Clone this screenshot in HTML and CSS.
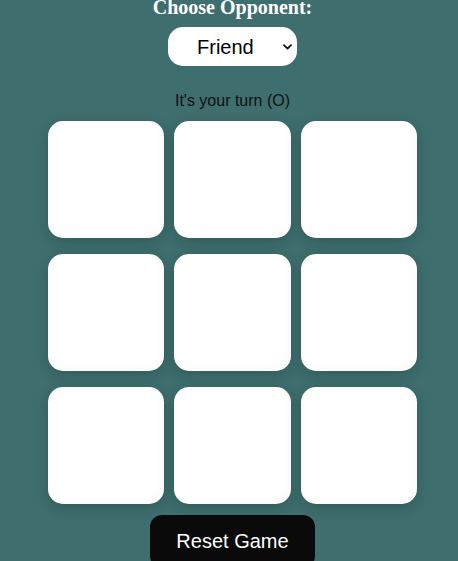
FILE: index.html
```html
<!DOCTYPE html>
<html>
<head>
<meta charset="utf-8">
<link rel="stylesheet" href="styles.css">
</head>
<body>
<div class="app">
  <h1 class="title">Choose Opponent:</h1>
  <div class="select-wrap">
    <select class="opponent">
      <option>Friend</option>
      <option>Computer</option>
    </select>
    <svg class="chev" width="9" height="6" viewBox="0 0 9 6"><path d="M1 1.2 L4.5 4.6 L8 1.2" fill="none" stroke="#111" stroke-width="1.8" stroke-linecap="round" stroke-linejoin="round"/></svg>
  </div>
  <p class="status">It's your turn (O)</p>
  <div class="board">
    <div class="cell"></div>
    <div class="cell"></div>
    <div class="cell"></div>
    <div class="cell"></div>
    <div class="cell"></div>
    <div class="cell"></div>
    <div class="cell"></div>
    <div class="cell"></div>
    <div class="cell"></div>
  </div>
  <button class="reset">Reset Game</button>
</div>
</body>
</html>
```
FILE: styles.css
```css
html, body {
  margin: 0;
  padding: 0;
  background: #3e6e6e;
  overflow: hidden;
}
.app {
  display: flex;
  flex-direction: column;
  align-items: center;
  padding-left: 7px;
  font-family: "Liberation Sans", Arial, sans-serif;
}
.title {
  margin: -4px 0 0;
  font-family: "Liberation Serif", "Times New Roman", serif;
  font-size: 20px;
  font-weight: bold;
  line-height: 23px;
  color: #fff;
}
.select-wrap {
  position: relative;
  margin-top: 8px;
}
.opponent {
  appearance: none;
  -webkit-appearance: none;
  width: 129px;
  height: 39px;
  border: none;
  border-radius: 15px;
  background: #fff;
  font-family: "Liberation Sans", Arial, sans-serif;
  font-size: 20px;
  color: #000;
  padding: 0 0 0 29px;
  margin: 0;
  outline: none;
}
.chev {
  position: absolute;
  right: 5px;
  top: 17px;
  pointer-events: none;
}
.status {
  margin: 26px 0 0;
  font-size: 16px;
  line-height: 18px;
  color: #111;
}
.board {
  margin-top: 11px;
  width: 369px;
  display: grid;
  grid-template-columns: repeat(3, 1fr);
  grid-auto-rows: 117px;
  column-gap: 10px;
  row-gap: 16px;
}
.cell {
  background: #fff;
  border-radius: 15px;
  box-shadow: 0 4px 14px rgba(0, 0, 0, 0.18), inset -6px -4px 8px rgba(0, 0, 0, 0.015);
}
.reset {
  margin-top: 11px;
  padding: 15px 26px;
  border: none;
  border-radius: 12px;
  background: #0a0a0a;
  color: #fff;
  font-family: "Liberation Sans", Arial, sans-serif;
  font-size: 20px;
  line-height: 23px;
}
```
